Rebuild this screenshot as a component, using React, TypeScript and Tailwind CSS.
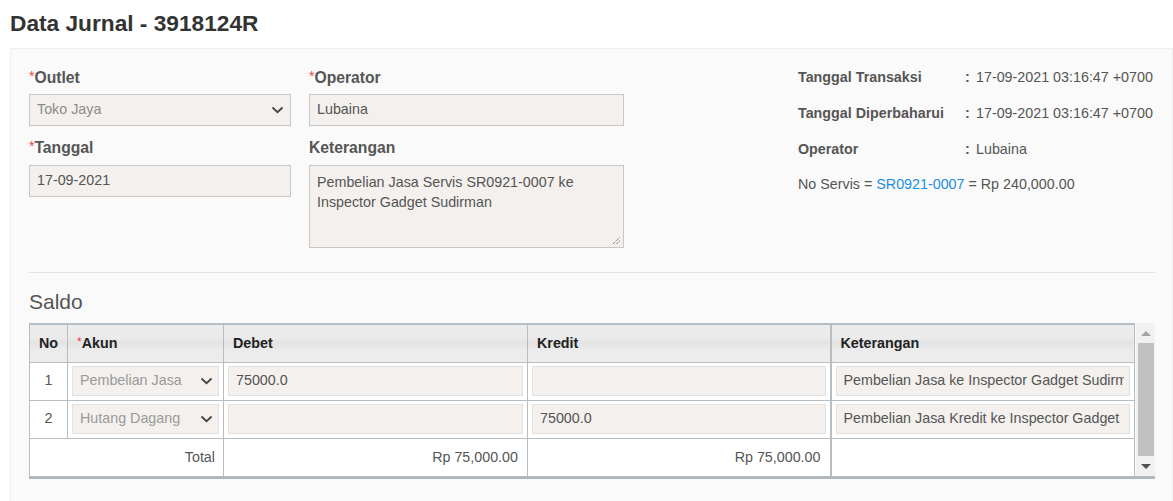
import React from "react";

const font = { fontFamily: '"Liberation Sans", Arial, sans-serif' };

function Chevron() {
  return (
    <svg width="13" height="8" viewBox="0 0 13 8" className="shrink-0">
      <path d="M1.5 1.5 L6.5 6.2 L11.5 1.5" fill="none" stroke="#444" strokeWidth="1.8" />
    </svg>
  );
}

function Label({ text, required }: { text: string; required?: boolean }) {
  return (
    <div className="h-[22px] text-[15.7px] font-bold leading-[22px] text-[#555]">
      {required && <span className="align-top text-[14px] font-normal leading-[18px] text-[#e2474f]">*</span>}
      {text}
    </div>
  );
}

function Field({ value, select, muted }: { value: string; select?: boolean; muted?: boolean }) {
  return (
    <div
      className={`flex h-8 items-center justify-between border border-[#c7c7c7] bg-[#f3f0ed] pl-[7px] pr-[6px] text-[14.3px] ${
        muted ? "text-[#8c8c8c]" : "text-[#555]"
      }`}
    >
      <span>{value}</span>
      {select && <Chevron />}
    </div>
  );
}

function Info({ label, value }: { label: string; value: string }) {
  return (
    <div className="flex h-[35.7px] items-center text-[14.3px] text-[#555]">
      <span className="w-[167px] font-bold">{label}</span>
      <span className="w-[11px] font-bold">:</span>
      <span>{value}</span>
    </div>
  );
}

const rows = [
  { no: 1, akun: "Pembelian Jasa", debet: "75000.0", kredit: "", ket: "Pembelian Jasa ke Inspector Gadget Sudirman" },
  { no: 2, akun: "Hutang Dagang", debet: "", kredit: "75000.0", ket: "Pembelian Jasa Kredit ke Inspector Gadget Sudirman" },
];

function CellInput({ value, select }: { value: string; select?: boolean }) {
  return (
    <div
      className={`flex h-[30px] items-center justify-between overflow-hidden whitespace-nowrap border border-[#e3e1df] bg-[#f3f0ed] pl-[7px] pr-[5px] text-[14.3px] ${
        select ? "text-[#9a9a9a]" : "text-[#555]"
      }`}
    >
      <span className="overflow-hidden">{value}</span>
      {select && <Chevron />}
    </div>
  );
}

export default function App() {
  const th = "h-[38px] border border-[#b6bec4] px-[9px] text-left text-[14.3px] font-bold text-[#222]";
  const td = "h-[38px] border border-[#b6bec4] px-[4px]";
  return (
    <div style={font} className="min-h-[501px] bg-white">
      <h1 className="px-[10px] pt-[8px] text-[22.7px] font-bold leading-[30px] text-[#333]">Data Jurnal - 3918124R</h1>
      <div className="ml-[10px] mt-[10px] border border-[#efefef] bg-[#fafafa] pl-[18px] pr-[17px] pt-[18px] pb-[30px]">
        <div className="flex">
          <div className="w-[262px]">
            <Label text="Outlet" required />
            <div className="mt-[5px]">
              <Field value="Toko Jaya" select muted />
            </div>
            <div className="mt-[11px]">
              <Label text="Tanggal" required />
            </div>
            <div className="mt-[6px]">
              <Field value="17-09-2021" />
            </div>
          </div>
          <div className="ml-[18px] w-[315px]">
            <Label text="Operator" required />
            <div className="mt-[5px]">
              <Field value="Lubaina" />
            </div>
            <div className="mt-[11px]">
              <Label text="Keterangan" />
            </div>
            <div className="relative mt-[6px] h-[83px] border border-[#c7c7c7] bg-[#f3f0ed] px-[7px] py-[6px] text-[14.3px] leading-[20px] text-[#555]">
              Pembelian Jasa Servis SR0921-0007 ke Inspector Gadget Sudirman
              <svg width="9" height="9" viewBox="0 0 9 9" className="absolute bottom-[2px] right-[2px]">
                <path d="M1 8 L8 1 M4.5 8 L8 4.5" stroke="#555" strokeWidth="1" strokeDasharray="1 1" />
              </svg>
            </div>
          </div>
          <div className="ml-auto mt-[-7px] w-[357px]">
            <Info label="Tanggal Transaksi" value="17-09-2021 03:16:47 +0700" />
            <Info label="Tanggal Diperbaharui" value="17-09-2021 03:16:47 +0700" />
            <Info label="Operator" value="Lubaina" />
            <div className="flex h-[35.7px] items-center text-[14.3px] text-[#555]">
              No Servis =&nbsp;<span className="text-[#1a8fe3]">SR0921-0007</span>&nbsp;= Rp 240,000.00
            </div>
          </div>
        </div>

        <div className="mt-[24px] border-t border-[#e2e2e2]" />

        <div className="mt-[16px] text-[21px] leading-[26px] text-[#555]">Saldo</div>

        <div className="mt-[8px] flex border-b-[3px] border-[#b0b8bd]">
          <table className="w-[1105px] table-fixed border-collapse">
            <colgroup>
              <col className="w-[38px]" />
              <col className="w-[156px]" />
              <col className="w-[304px]" />
              <col className="w-[303px]" />
              <col className="w-[304px]" />
            </colgroup>
            <thead>
              <tr className="h-[38px] bg-[linear-gradient(#ececec_0%,#ebebeb_35%,#e3e3e3_50%,#ebebeb_65%,#ededed_100%)]">
                <th className={`${th} border-t-2 text-center`}>No</th>
                <th className={`${th} border-t-2`}>
                  <span className="align-top text-[12px] font-normal text-[#e2474f]">*</span>Akun
                </th>
                <th className={`${th} border-t-2`}>Debet</th>
                <th className={`${th} border-t-2`}>Kredit</th>
                <th className={`${th} border-t-2 border-l-2`}>Keterangan</th>
              </tr>
            </thead>
            <tbody className="bg-white">
              {rows.map((r) => (
                <tr key={r.no} className="h-[38px]">
                  <td className={`${td} text-center text-[14.3px] text-[#555]`}>{r.no}</td>
                  <td className={td}>
                    <CellInput value={r.akun} select />
                  </td>
                  <td className={td}>
                    <CellInput value={r.debet} />
                  </td>
                  <td className={td}>
                    <CellInput value={r.kredit} />
                  </td>
                  <td className={`${td} border-l-2`}>
                    <CellInput value={r.ket} />
                  </td>
                </tr>
              ))}
              <tr className="h-[38px]">
                <td colSpan={2} className={`${td} border-b-0 pr-[8px] text-right text-[14.3px] text-[#555]`}>
                  Total
                </td>
                <td className={`${td} border-b-0 pr-[9px] text-right text-[14.3px] text-[#555]`}>Rp 75,000.00</td>
                <td className={`${td} border-b-0 pr-[9px] text-right text-[14.3px] text-[#555]`}>Rp 75,000.00</td>
                <td className={`${td} border-b-0 border-l-2`} />
              </tr>
            </tbody>
          </table>
          <div className="ml-[1px] flex w-[20px] flex-col items-center bg-[#f1f1f1]">
            <div className="flex h-[20px] items-center justify-center">
              <div className="h-0 w-0 border-x-[5px] border-b-[5px] border-x-transparent border-b-[#a3a3a3]" />
            </div>
            <div className="w-[16px] flex-1 bg-[#c1c1c1]" />
            <div className="flex h-[20px] items-center justify-center">
              <div className="h-0 w-0 border-x-[5px] border-t-[5px] border-x-transparent border-t-[#505050]" />
            </div>
          </div>
        </div>
      </div>
    </div>
  );
}
